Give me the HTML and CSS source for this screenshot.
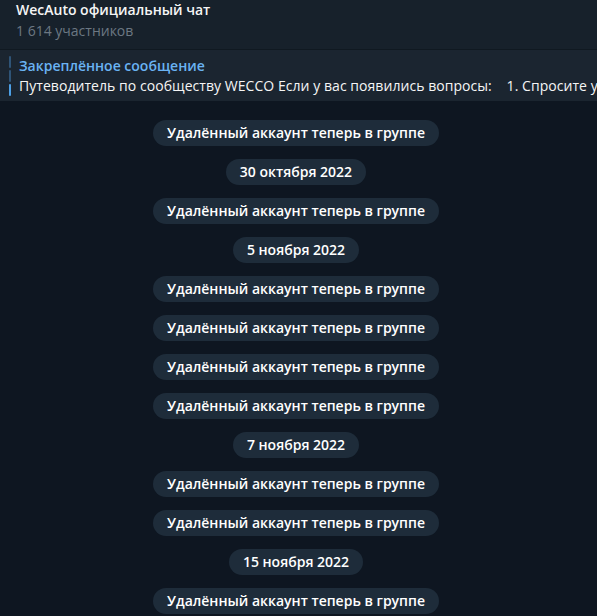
FILE: index.html
```html
<!DOCTYPE html>
<html lang="ru">
<head>
<meta charset="utf-8">
<link rel="stylesheet" href="styles.css">
</head>
<body>
<div class="app">
  <header class="topbar">
    <div class="title">WecAuto официальный чат</div>
    <div class="subtitle">1 614 участников</div>
  </header>
  <div class="pinned">
    <div class="pin-bars">
      <span class="seg"></span>
      <span class="seg"></span>
      <span class="seg active"></span>
    </div>
    <div class="pin-text">
      <div class="pin-title">Закреплённое сообщение</div>
      <div class="pin-body">Путеводитель по сообществу WECCO Если у вас появились вопросы: &nbsp;&nbsp;&nbsp;1. Спросите у</div>
    </div>
  </div>
  <main class="chat">
    <div class="service"><span>Удалённый аккаунт теперь в группе</span></div>
    <div class="service"><span>30 октября 2022</span></div>
    <div class="service"><span>Удалённый аккаунт теперь в группе</span></div>
    <div class="service"><span>5 ноября 2022</span></div>
    <div class="service"><span>Удалённый аккаунт теперь в группе</span></div>
    <div class="service"><span>Удалённый аккаунт теперь в группе</span></div>
    <div class="service"><span>Удалённый аккаунт теперь в группе</span></div>
    <div class="service"><span>Удалённый аккаунт теперь в группе</span></div>
    <div class="service"><span>7 ноября 2022</span></div>
    <div class="service"><span>Удалённый аккаунт теперь в группе</span></div>
    <div class="service"><span>Удалённый аккаунт теперь в группе</span></div>
    <div class="service"><span>15 ноября 2022</span></div>
    <div class="service"><span>Удалённый аккаунт теперь в группе</span></div>
  </main>
</div>
</body>
</html>
```

FILE: styles.css
```css
* { box-sizing: border-box; }
html, body {
  margin: 0;
  padding: 0;
  background: #0e1621;
  font-family: "Open Sans", "DejaVu Sans", sans-serif;
  overflow: hidden;
}
.app {
  width: 597px;
  height: 616px;
  display: flex;
  flex-direction: column;
  background: #0e1621;
}
.topbar {
  height: 50px;
  background: #17212b;
  padding: 0 16px;
  border-bottom: 1px solid #101921;
}
.title {
  color: #f5f5f5;
  font-size: 14px;
  font-weight: 600;
  line-height: 19px;
}
.subtitle {
  color: #6c7883;
  font-size: 14px;
  line-height: 19px;
  margin-top: 2px;
}
.pinned {
  height: 51px;
  background: #1b2530;
  display: flex;
  align-items: center;
  padding-left: 9px;
  gap: 8px;
  white-space: nowrap;
  overflow: hidden;
}
.pin-bars {
  display: flex;
  flex-direction: column;
  gap: 2px;
  width: 2px;
  margin-top: 1px;
}
.seg {
  display: block;
  width: 2px;
  height: 12px;
  background: #2f5477;
  border-radius: 1px;
}
.seg.active { background: #4da0e6; }
.pin-text { line-height: 20px; }
.pin-title {
  color: #6ab3f3;
  font-size: 14px;
  font-weight: 600;
}
.pin-body {
  color: #f5f5f5;
  font-size: 14px;
  letter-spacing: 0.05px;
}
.chat {
  display: flex;
  flex-direction: column;
  align-items: center;
  gap: 13px;
  padding: 19px 5px 0 0;
}
.service {
  display: flex;
  justify-content: center;
}
.service span {
  display: block;
  background: #1e2c3a;
  color: #ffffff;
  font-size: 14px;
  font-weight: 600;
  line-height: 26px;
  height: 26px;
  padding: 0 14px;
  border-radius: 13px;
}
```
